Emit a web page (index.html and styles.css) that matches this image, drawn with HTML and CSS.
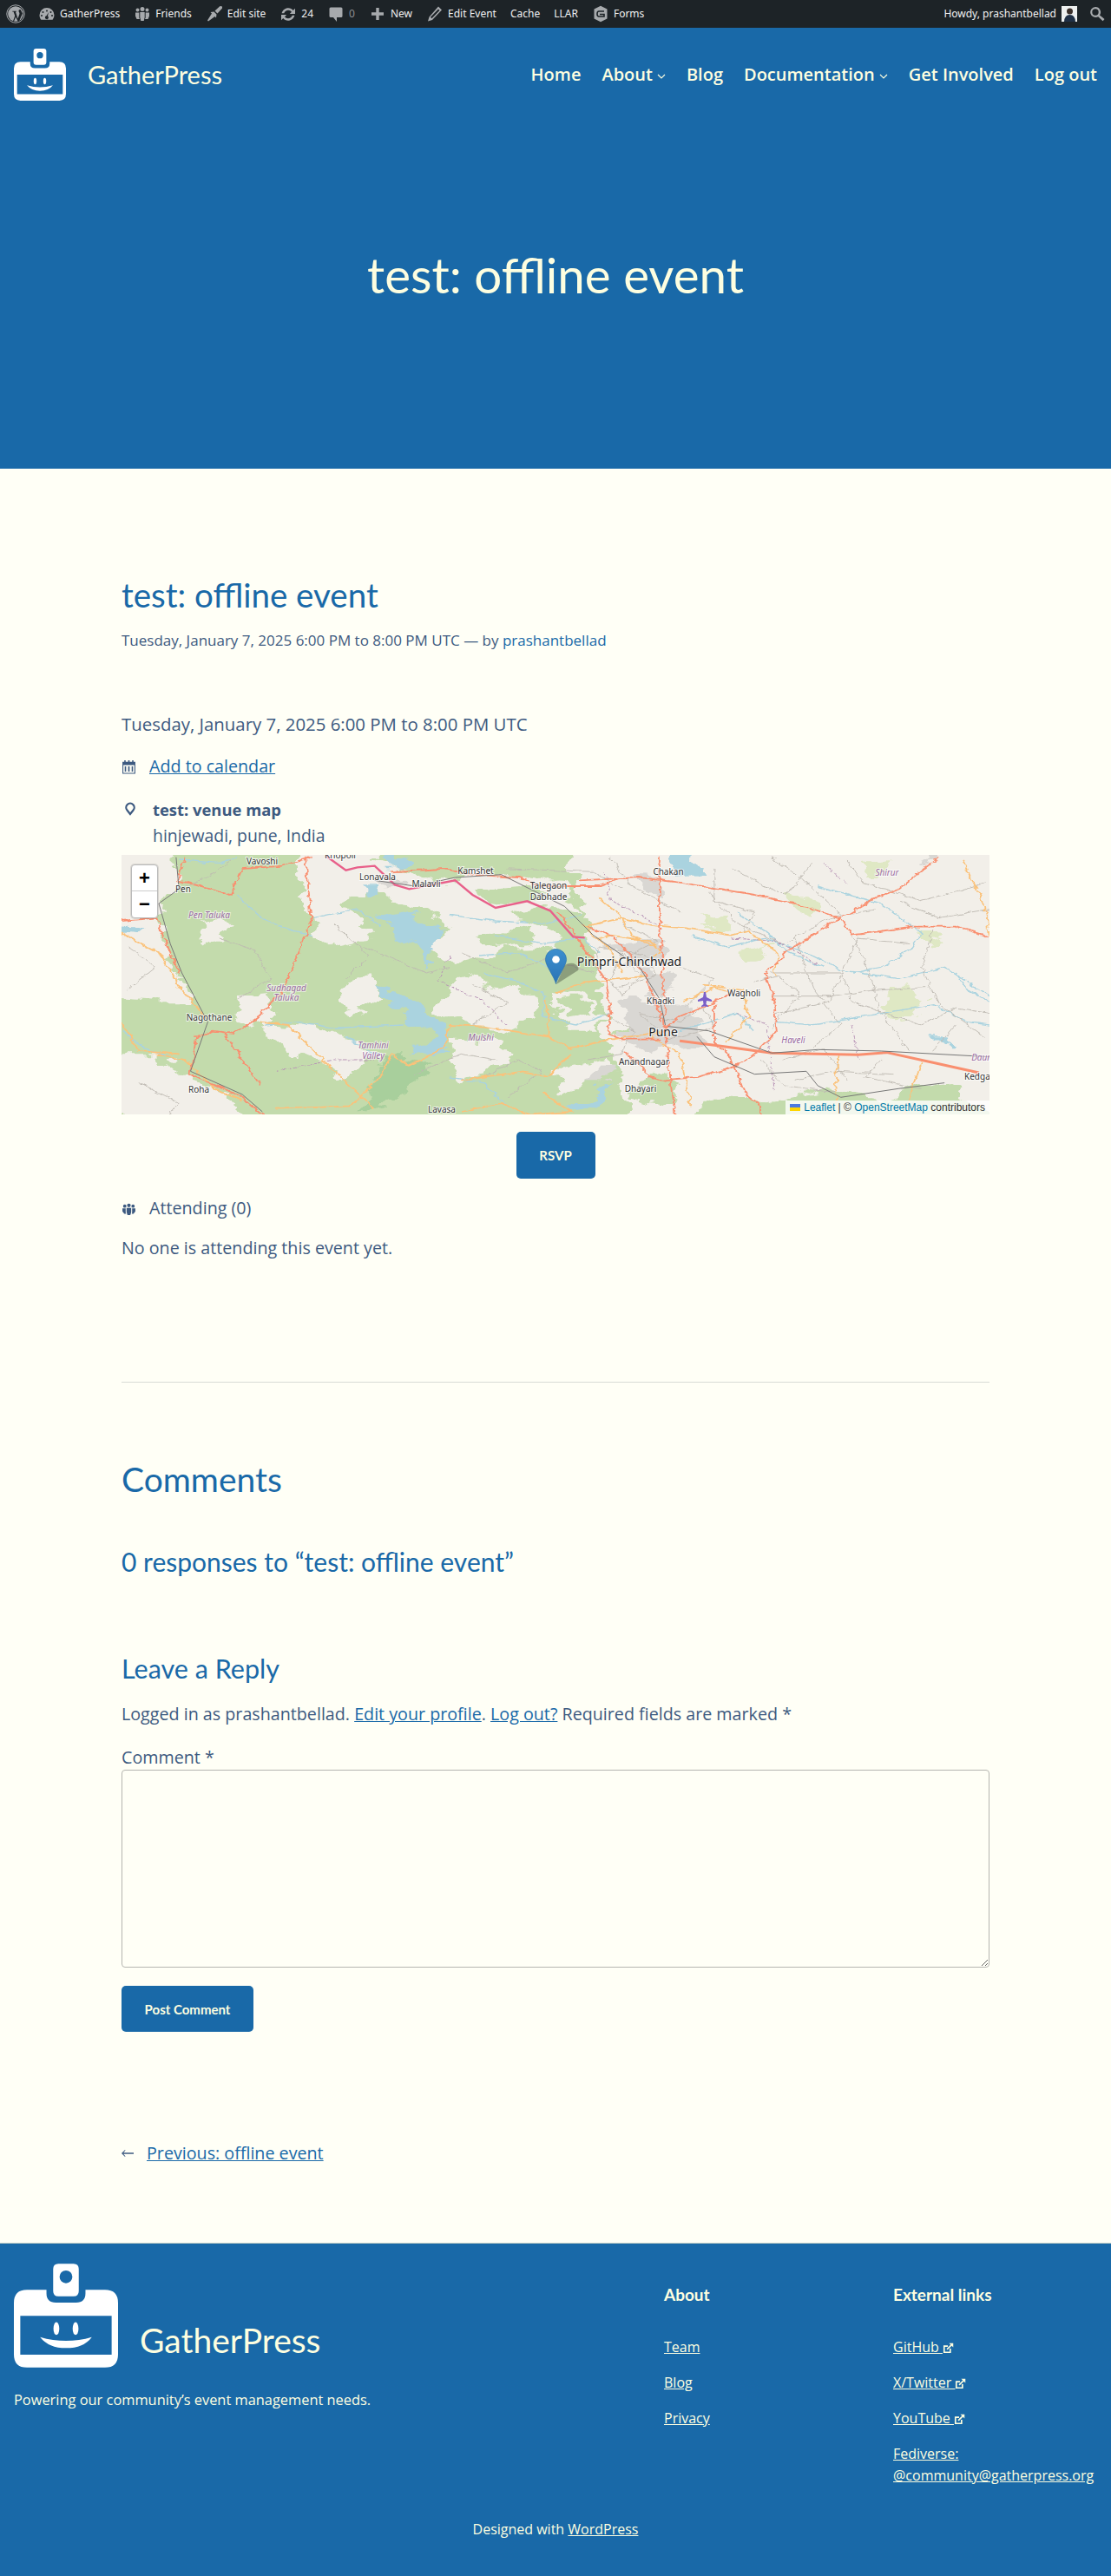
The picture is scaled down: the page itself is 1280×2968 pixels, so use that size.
FILE: index.html
```html
<!DOCTYPE html>
<html lang="en">
<head>
<meta charset="utf-8">
<title>test: offline event – GatherPress</title>
<link rel="stylesheet" href="styles.css">
</head>
<body>
<svg class="defs" aria-hidden="true">
  <defs>
    <filter id="organic" x="-5%" y="-5%" width="110%" height="110%">
      <feTurbulence type="fractalNoise" baseFrequency=".018" numOctaves="4" seed="7"/>
      <feDisplacementMap in="SourceGraphic" scale="70" xChannelSelector="R" yChannelSelector="G"/>
    </filter>
    <filter id="wiggle" x="-5%" y="-5%" width="110%" height="110%">
      <feTurbulence type="fractalNoise" baseFrequency=".05" numOctaves="3" seed="3"/>
      <feDisplacementMap in="SourceGraphic" scale="14" xChannelSelector="R" yChannelSelector="G"/>
    </filter>
  </defs>
  <symbol id="badge" viewBox="50 88 358 357">
    <path fill="#fff" fill-rule="evenodd" d="M95 178H162V190Q162 222 194 222H264Q296 222 296 190V178H363Q408 178 408 223V400Q408 445 363 445H95Q50 445 50 400V223Q50 178 95 178ZM72 267V401H386V267Z"/>
    <path fill="#fff" fill-rule="evenodd" d="M203 88H255Q273 88 273 106V182Q273 200 255 200H203Q185 200 185 182V106Q185 88 203 88ZM229 111A22 22 0 1 0 229.01 155A22 22 0 1 0 229 111Z"/>
    <ellipse fill="#fff" cx="196" cy="311" rx="10" ry="22"/>
    <ellipse fill="#fff" cx="262" cy="311" rx="10" ry="22"/>
    <path fill="#fff" d="M140 340Q229 366 318 340Q290 378 229 378Q170 378 140 340Z"/>
  </symbol>
  <symbol id="ext" viewBox="0 0 14 14">
    <path fill="none" stroke="currentColor" stroke-width="1.800" d="M9.500 7.500V12.100H1.900V4.500H6.500"/>
    <path fill="none" stroke="currentColor" stroke-width="1.800" d="M5.500 8.500L12 2"/>
    <path fill="currentColor" d="M8 .8H13.200V6Z"/>
  </symbol>
</svg>

<div class="adminbar">
  <div class="ab-group">
    <span class="ab-item ab-logo"><svg class="ab-icon-lg" viewBox="0 0 20 20"><circle cx="10" cy="10" r="9.300" fill="none" stroke="#a7aaad" stroke-width=".9"/><circle cx="10" cy="10" r="8" fill="#a7aaad"/><path fill="#1d2327" d="M3 7.200L7.200 17.800 9.300 12 7.800 7.800H6.600V7H11V7.800H9.900L12.300 15 13.900 10.500C14.500 8.700 13.400 8.200 13.200 7.200 13 5.900 14.200 5 15.300 5.700L17.300 9.500 13.500 18 12.700 18.300 10.100 13.200 8 18.300 7.300 18.100Z"/></svg></span>
    <span class="ab-item"><svg class="ab-icon" viewBox="0 0 20 20"><path fill="#a7aaad" d="M10 3A8.500 8.500 0 0 0 1.500 11.500C1.500 13.500 2.200 15.400 3.400 16.800H16.600A8.500 8.500 0 0 0 18.500 11.500 8.500 8.500 0 0 0 10 3ZM10 5.500A1 1 0 1 1 10 7.500 1 1 0 0 1 10 5.500ZM5.500 7A1 1 0 1 1 5.500 9 1 1 0 0 1 5.500 7ZM14.500 7A1 1 0 1 1 14.500 9 1 1 0 0 1 14.500 7ZM4 11A1 1 0 1 1 4 13 1 1 0 0 1 4 11ZM16 11A1 1 0 1 1 16 13 1 1 0 0 1 16 11ZM12 8L11 12.500A2 2 0 1 1 9.500 12.200Z"/></svg>GatherPress</span>
    <span class="ab-item"><svg class="ab-icon" viewBox="0 0 20 20"><path fill="#a7aaad" d="M10 2A2.500 2.500 0 1 1 10 7 2.500 2.500 0 0 1 10 2ZM4.500 3.500A2 2 0 1 1 4.500 7.500 2 2 0 0 1 4.500 3.500ZM15.500 3.500A2 2 0 1 1 15.500 7.500 2 2 0 0 1 15.500 3.500ZM7.300 8H12.700V14L11.700 18H8.300L7.300 14ZM2 8.500H6.300V14.500L7 16H3.500L2 12.500ZM13.700 8.500H18V12.500L16.500 16H13L13.700 14.500Z"/></svg>Friends</span>
    <span class="ab-item"><svg class="ab-icon" viewBox="0 0 20 20"><path fill="#a7aaad" d="M19 1.500L16.500 1 10.500 6.500 13.500 9.500 19 3.500ZM9.500 7.500L5.500 8 7 9.500 2 17.500 3 18.500 10.500 13 12 14.500 12.500 10.500Z"/></svg>Edit site</span>
    <span class="ab-item"><svg class="ab-icon" viewBox="0 0 20 20"><path fill="#a7aaad" d="M10.200 3.300C12.500 3.300 14.400 4.300 15.700 6L18 3.700V10H11.800L14 7.800C13.100 6.500 11.700 5.800 10.200 5.800 7.900 5.800 6 7.300 5.300 9.300H2.600C3.400 5.900 6.500 3.300 10.200 3.300ZM2 11H8.200L6 13.200C6.900 14.500 8.300 15.200 9.800 15.200 12.100 15.200 14 13.700 14.700 11.700H17.400C16.600 15.100 13.500 17.700 9.800 17.700 7.500 17.700 5.600 16.700 4.300 15L2 17.300Z"/></svg>24</span>
    <span class="ab-item ab-dim"><svg class="ab-icon" viewBox="0 0 20 20"><path fill="#a7aaad" d="M4 2.500H16A1.500 1.500 0 0 1 17.500 4V12.500A1.500 1.500 0 0 1 16 14H11V19L7 14H4A1.500 1.500 0 0 1 2.500 12.500V4A1.500 1.500 0 0 1 4 2.500Z"/></svg>0</span>
    <span class="ab-item"><svg class="ab-icon" viewBox="0 0 20 20"><path fill="#a7aaad" d="M8.300 3H11.700V8.300H17V11.700H11.700V17H8.300V11.700H3V8.300H8.300Z"/></svg>New</span>
    <span class="ab-item"><svg class="ab-icon" viewBox="0 0 20 20"><path fill="#a7aaad" d="M14 1.500L18 5.500 7 17 2 18.500 3.500 13.500ZM14 4.500L5 13.800 6.500 15.300 15.500 6Z"/></svg>Edit Event</span>
    <span class="ab-item">Cache</span>
    <span class="ab-item">LLAR</span>
    <span class="ab-item"><svg class="ab-icon" viewBox="0 0 20 20"><path fill="#a7aaad" d="M10 .8L17.500 4.600V15.400L10 19.200 2.500 15.400V4.600Z"/><path fill="none" stroke="#1d2327" stroke-width="1.600" d="M14 7H8Q6 7 6 10T8 13H14V10.500H9"/></svg>Forms</span>
  </div>
  <div class="ab-group">
    <span class="ab-item ab-user">Howdy, prashantbellad<svg class="ab-avatar" viewBox="0 0 18 18"><rect width="18" height="18" fill="#eef0f0"/><circle cx="9.500" cy="6" r="3.500" fill="#3a2f2a"/><path fill="#1f2f45" d="M3 18Q3.500 10 9.500 10T16 18Z"/></svg></span>
    <span class="ab-item ab-search"><svg class="ab-icon" viewBox="0 0 20 20"><path fill="#a7aaad" d="M8 2A6 6 0 0 1 13 11.400L18.500 16 16.600 18.300 11.200 13.200A6 6 0 1 1 8 2ZM8 4.300A3.700 3.700 0 1 0 8 11.700 3.700 3.700 0 0 0 8 4.300Z"/></svg></span>
  </div>
</div>

<header class="hero">
  <div class="topnav">
    <a class="brand"><svg class="brand-logo"><use href="#badge"/></svg><span>GatherPress</span></a>
    <nav class="mainnav">
      <a>Home</a>
      <a>About<svg class="chev" viewBox="0 0 10 6"><path d="M1 1L5 5 9 1"/></svg></a>
      <a>Blog</a>
      <a>Documentation<svg class="chev" viewBox="0 0 10 6"><path d="M1 1L5 5 9 1"/></svg></a>
      <a>Get Involved</a>
      <a>Log out</a>
    </nav>
  </div>
  <h1 class="hero-title">test: offline event</h1>
</header>

<main class="content">
  <h2 class="post-title">test: offline event</h2>
  <p class="meta">Tuesday, January 7, 2025 6:00 PM to 8:00 PM UTC <span class="dash">—</span> by <a>prashantbellad</a></p>
  <p class="datetime">Tuesday, January 7, 2025 6:00 PM to 8:00 PM UTC</p>
  <p class="cal-row"><svg class="row-icon" viewBox="0 0 16 16"><path fill="#3d5a80" d="M1 2.500H3V1H4.500V2.500H7.200V1H8.800V2.500H11.500V1H13V2.500H15V15.500H1ZM2 6V14.500H14V6ZM3.500 7.500H5V13.200H3.500ZM7.200 7.500H8.800V13.200H7.200ZM11 7.500H12.500V13.200H11Z"/></svg><a>Add to calendar</a></p>
  <div class="venue">
    <svg class="pin-icon" viewBox="0 0 14 16"><path fill="none" stroke="#3d5a80" stroke-width="2.200" d="M7 14L3.500 9.500A4.700 4.700 0 1 1 10.500 9.500Z"/></svg>
    <div>
      <div class="venue-name">test: venue map</div>
      <div class="venue-addr">hinjewadi, pune, India</div>
    </div>
  </div>

  <div class="map">
    <svg class="map-art" viewBox="0 0 1000 299" preserveAspectRatio="none">
      <rect width="1000" height="299" fill="#f2efe9"/>
      <g transform="translate(-20,-4) scale(.6631,.3333)">
        <g filter="url(#organic)">
          <path fill="#c3dbac" d="M-40 -40H800L840 240 860 420 870 620 890 760 920 960H-40Z"/>
          <g fill="#f2efe9">
            <path d="M-40 -40H125L130 120 90 170 105 300 120 380 150 520 90 520 -40 500Z"/>
            <path d="M330 -40H500L470 90 430 190 470 300 400 330 360 300 345 180Z"/>
            <path d="M430 30L520 60 610 110 640 60 800 100 830 210 760 190 640 250 560 210 500 170 450 110Z"/>
            <path d="M165 250L210 255 215 320 170 320Z"/>
            <path d="M600 200L700 220 780 250 790 330 700 340 650 370 610 390 570 330Z"/>
            <path d="M620 430L700 470 750 510 760 560 700 620 610 590 570 530Z"/>
            <path d="M235 495L285 490 290 590 240 610Z"/>
            <path d="M270 590L360 600 430 650 480 690 420 780 350 720 290 650Z"/>
            <path d="M610 640L680 650 700 730 620 790 590 720Z"/>
            <path d="M-40 700L100 700 150 800 210 820 250 960 70 960 -40 860Z"/>
            <path d="M780 480L850 490 865 620 790 620Z"/>
            <path d="M780 760L860 710 880 760 840 800 790 830Z"/>
            <path d="M420 440L470 430 480 500 440 560 400 530Z"/>
          </g>
          <g fill="#c3dbac">
            <path d="M660 290L750 250 745 320 680 340Z"/>
            <path d="M650 130L730 120 760 160 720 190 660 180Z"/>
            <path d="M790 510L840 500 850 570 800 590Z"/>
            <path d="M1100 880L1250 820 1330 850 1440 795 1500 860 1580 960H1100Z"/>
            <path d="M920 560L980 590 960 660 890 640Z"/>
            <path d="M1000 960L1040 860 1130 860 1100 960Z"/>
            <path d="M950 770L1000 800 970 880 920 860Z"/>
          </g>
          <path fill="#a8cf9c" d="M480 700L515 700 520 740 575 725 560 770 520 800 525 840 470 910 445 910 470 820Z"/>
          <g fill="#dfe8c4">
            <path d="M1200 150L1250 180 1240 230 1200 210Z"/>
            <path d="M1350 470L1400 460 1440 520 1390 590 1350 560Z"/>
            <path d="M1040 230L1090 220 1080 280 1050 270Z"/>
            <path d="M1110 340L1160 320 1150 370 1120 380Z"/>
            <path d="M1320 30L1350 25 1350 90 1325 90Z"/>
            <path d="M1420 270L1460 280 1440 340Z"/>
          </g>
          <g fill="#d9d7d3">
            <path d="M880 320L960 300 970 370 900 400Z"/>
            <path d="M940 400L985 420 975 510 940 500Z"/>
            <path d="M910 510L1010 530 1050 650 960 690 900 640Z"/>
            <path d="M920 90L970 100 965 150 925 140Z"/>
            <path d="M480 100L510 100 510 130 490 130Z"/>
            <path d="M850 740L880 740 880 790 850 790Z"/>
            <path d="M1420 -20L1460 -20 1440 40Z"/>
          </g>
          <g fill="#aad3df">
            <path d="M480 225L520 210 575 250 580 330 560 400 540 310 500 270Z"/>
            <path d="M470 470L510 500 545 540 590 590 605 640 590 690 530 710 580 640 540 590 500 540Z"/>
            <path d="M490 -20L520 -20 515 55 495 55Z"/>
            <path d="M980 -20L1040 -20 1030 85 985 90Z"/>
            <path d="M35 250L75 255 60 280 38 275Z"/>
            <path d="M450 115L480 115 470 150 450 150Z"/>
            <path d="M1450 640L1470 640 1465 670 1450 670Z"/>
            <path d="M800 890L880 800 860 860 820 905Z"/>
          </g>
        </g>
        <g filter="url(#wiggle)">
          <g fill="none" stroke="#aad3df" stroke-width="1.400">
            <path vector-effect="non-scaling-stroke" d="M680 290L760 320 830 300 860 350"/>
            <path vector-effect="non-scaling-stroke" d="M650 360L720 350 770 400"/>
            <path vector-effect="non-scaling-stroke" d="M660 420L720 450 770 500 760 570 820 600 880 560"/>
            <path vector-effect="non-scaling-stroke" d="M1020 290L1080 330 1150 300 1220 350 1280 410 1380 440 1460 400 1538 500"/>
            <path vector-effect="non-scaling-stroke" d="M1170 590L1230 600 1290 580 1350 560 1440 530 1500 590 1538 600"/>
            <path vector-effect="non-scaling-stroke" d="M1240 120L1350 180 1420 280 1400 340 1350 400 1300 420"/>
            <path vector-effect="non-scaling-stroke" d="M1100 210L1150 280 1190 350 1250 400"/>
            <path vector-effect="non-scaling-stroke" d="M280 600L340 590 400 610 520 600"/>
            <path vector-effect="non-scaling-stroke" d="M130 30L200 40 230 20"/>
            <path vector-effect="non-scaling-stroke" d="M1000 620L1100 560 1130 620"/>
            <path vector-effect="non-scaling-stroke" d="M360 230L440 200 480 260"/>
            <path vector-effect="non-scaling-stroke" d="M230 150L250 190 290 250 360 290"/>
            <path vector-effect="non-scaling-stroke" d="M600 220L680 240 760 250 830 220"/>
            <path vector-effect="non-scaling-stroke" d="M30 620L70 680 130 720"/>
            <path vector-effect="non-scaling-stroke" d="M600 780L660 800 700 880"/>
            <path vector-effect="non-scaling-stroke" d="M1480 420L1500 480 1538 520"/>
            <path vector-effect="non-scaling-stroke" d="M420 640L460 690 480 700"/>
          </g>
          <g fill="none" stroke="#bdb9b1" stroke-width=".9">
            <path vector-effect="non-scaling-stroke" d="M1050 140L1100 250 1180 320 1260 230 1340 200"/>
            <path vector-effect="non-scaling-stroke" d="M1090 60L1180 150 1200 120 1230 40"/>
            <path vector-effect="non-scaling-stroke" d="M1160 420L1280 420 1300 520 1420 600 1480 540 1538 560"/>
            <path vector-effect="non-scaling-stroke" d="M1170 560L1260 520 1310 300 1400 320"/>
            <path vector-effect="non-scaling-stroke" d="M1180 720L1250 680 1290 790"/>
            <path vector-effect="non-scaling-stroke" d="M1350 720L1320 780 1420 820"/>
            <path vector-effect="non-scaling-stroke" d="M620 350L700 420 770 370 850 420"/>
            <path vector-effect="non-scaling-stroke" d="M450 330L560 420 600 400"/>
            <path vector-effect="non-scaling-stroke" d="M900 130L850 70 700 60"/>
            <path vector-effect="non-scaling-stroke" d="M220 30L180 90 130 130"/>
            <path vector-effect="non-scaling-stroke" d="M1000 400L1060 440 1010 540"/>
            <path vector-effect="non-scaling-stroke" d="M1130 450L1170 430 1210 490 1160 610"/>
            <path vector-effect="non-scaling-stroke" d="M660 780L720 720 760 760 700 850"/>
            <path vector-effect="non-scaling-stroke" d="M900 350L930 430 900 500 880 440Z"/>
            <path vector-effect="non-scaling-stroke" d="M930 560L1000 590 1040 540 1060 610 980 650Z"/>
            <path vector-effect="non-scaling-stroke" d="M1160 20L1210 90 1280 220"/>
            <path vector-effect="non-scaling-stroke" d="M1290 30L1320 110 1420 170 1530 110"/>
            <path vector-effect="non-scaling-stroke" d="M1380 170L1450 230 1538 200"/>
            <path vector-effect="non-scaling-stroke" d="M1200 300L1230 470 1280 600 1230 680"/>
            <path vector-effect="non-scaling-stroke" d="M1300 290L1330 420 1350 560 1400 690"/>
            <path vector-effect="non-scaling-stroke" d="M1440 270L1420 400 1450 530 1530 640"/>
            <path vector-effect="non-scaling-stroke" d="M1480 600L1440 690"/>
            <path vector-effect="non-scaling-stroke" d="M1160 500L1260 500 1340 480 1430 470"/>
            <path vector-effect="non-scaling-stroke" d="M1060 60L1060 170 1130 210 1110 280"/>
            <path vector-effect="non-scaling-stroke" d="M1200 790L1270 760 1370 770"/>
            <path vector-effect="non-scaling-stroke" d="M1140 720L1180 810 1270 830"/>
            <path vector-effect="non-scaling-stroke" d="M880 20L910 110 1000 210"/>
            <path vector-effect="non-scaling-stroke" d="M870 560L920 620 900 700 840 720"/>
            <path vector-effect="non-scaling-stroke" d="M230 510L290 440 260 340 200 300"/>
            <path vector-effect="non-scaling-stroke" d="M40 330L90 400 40 480"/>
            <path vector-effect="non-scaling-stroke" d="M400 250L460 360 420 440"/>
            <path vector-effect="non-scaling-stroke" d="M640 460L700 520 640 600"/>
            <path vector-effect="non-scaling-stroke" d="M540 770L620 700 680 720"/>
            <path vector-effect="non-scaling-stroke" d="M60 800L130 870 110 910"/>
            <path vector-effect="non-scaling-stroke" d="M890 300L910 360 960 310 900 250"/>
            <path vector-effect="non-scaling-stroke" d="M860 330L940 360 960 430 890 470 850 400Z"/>
          </g>
          <g fill="none" stroke="#b793b5" stroke-dasharray="4 2">
            <path vector-effect="non-scaling-stroke" d="M1090 300L1170 310 1240 390"/>
            <path vector-effect="non-scaling-stroke" d="M1100 560L1150 600 1165 830"/>
            <path vector-effect="non-scaling-stroke" d="M600 360L580 450 660 520 700 600"/>
            <path vector-effect="non-scaling-stroke" d="M300 760L400 720 470 720"/>
            <path vector-effect="non-scaling-stroke" d="M870 70L880 170 970 260"/>
            <path vector-effect="non-scaling-stroke" d="M1300 600L1310 720"/>
            <path vector-effect="non-scaling-stroke" d="M1250 40L1290 110"/>
          </g>
          <g fill="none" stroke="#fbc27a" stroke-width="1.800">
            <path vector-effect="non-scaling-stroke" d="M835 260L900 230 950 255 1010 265 1090 290 1120 275 1170 350 1165 430"/>
            <path vector-effect="non-scaling-stroke" d="M860 160L900 230 915 290 960 330"/>
            <path vector-effect="non-scaling-stroke" d="M860 300L880 290 950 310 965 340 950 380"/>
            <path vector-effect="non-scaling-stroke" d="M785 490L830 455 900 440 940 430"/>
            <path vector-effect="non-scaling-stroke" d="M770 510L770 640 810 680 880 650 980 620"/>
            <path vector-effect="non-scaling-stroke" d="M600 600L660 605 770 640"/>
            <path vector-effect="non-scaling-stroke" d="M600 600L590 680 530 740 500 700 480 780 430 880 300 890"/>
            <path vector-effect="non-scaling-stroke" d="M1005 520L1060 470 1090 490"/>
            <path vector-effect="non-scaling-stroke" d="M1040 460L1110 480 1120 570 1080 660"/>
            <path vector-effect="non-scaling-stroke" d="M30 280L100 360 130 470 180 580"/>
            <path vector-effect="non-scaling-stroke" d="M270 590L320 600 360 680 410 780 470 890"/>
            <path vector-effect="non-scaling-stroke" d="M620 790L730 760 770 780 810 700"/>
            <path vector-effect="non-scaling-stroke" d="M760 830L810 900 740 910 690 870 620 900"/>
            <path vector-effect="non-scaling-stroke" d="M1490 30L1530 180 1538 290"/>
            <path vector-effect="non-scaling-stroke" d="M1275 700L1270 910"/>
            <path vector-effect="non-scaling-stroke" d="M1420 730L1400 850 1390 910"/>
            <path vector-effect="non-scaling-stroke" d="M90 700L140 720 200 830 240 860"/>
            <path vector-effect="non-scaling-stroke" d="M950 640L1000 700 1020 880"/>
            <path vector-effect="non-scaling-stroke" d="M830 250L880 340 900 420"/>
            <path vector-effect="non-scaling-stroke" d="M30 590L60 690 130 700"/>
          </g>
          <g fill="none" stroke="#f98f6f" stroke-width="1.800">
            <path vector-effect="non-scaling-stroke" d="M1450 20L1380 130 1340 160 1280 230 1190 340 1150 420 1165 530 1170 620 1130 700"/>
            <path vector-effect="non-scaling-stroke" d="M825 100L930 90 1010 110 1130 150 1200 180 1280 230 1300 290 1400 260 1480 260 1538 295"/>
            <path vector-effect="non-scaling-stroke" d="M965 20L965 240 975 610 990 910"/>
            <path vector-effect="non-scaling-stroke" d="M790 210L870 440 880 560 875 630 900 650 970 650"/>
            <path vector-effect="non-scaling-stroke" d="M840 260L880 290 940 420 970 590"/>
            <path vector-effect="non-scaling-stroke" d="M1090 490L1050 530 1000 570 975 610"/>
            <path vector-effect="non-scaling-stroke" d="M1060 530L1060 660 1090 710 1110 830"/>
            <path vector-effect="non-scaling-stroke" d="M970 790L1030 780 1090 750 1130 700"/>
            <path vector-effect="non-scaling-stroke" d="M905 690L950 780 975 795"/>
            <path vector-effect="non-scaling-stroke" d="M30 240L90 230 130 420"/>
            <path vector-effect="non-scaling-stroke" d="M140 20L130 100 220 150 240 60 310 50 360 20"/>
            <path vector-effect="non-scaling-stroke" d="M350 20L360 240 310 480 270 570 225 630 190 620 160 640 150 770 240 850 275 910"/>
            <path vector-effect="non-scaling-stroke" d="M210 630L270 810"/>
            <path vector-effect="non-scaling-stroke" d="M1110 830L1140 880 1140 910"/>
            <path vector-effect="non-scaling-stroke" d="M500 70L590 60 640 80 720 90 760 120 860 120 900 90"/>
          </g>
        </g>
        <path fill="none" stroke="#f98f6f" stroke-width="3" vector-effect="non-scaling-stroke" d="M1000 655L1060 670 1160 697 1310 703 1360 695 1440 730 1520 765"/>
        <path fill="none" stroke="#e8608a" stroke-width="2.400" vector-effect="non-scaling-stroke" d="M385 15L420 65 440 55 470 50 505 115 530 130 610 100 640 150 680 195 735 172 775 205 815 295 835 298"/>
        <g fill="none" stroke="#777">
          <path vector-effect="non-scaling-stroke" d="M125 20L130 130 95 180 115 320 135 420 180 590 150 760 240 840 275 900"/>
          <path vector-effect="non-scaling-stroke" d="M470 100L540 120 610 90 690 80 800 190 850 290 930 400 965 510 975 600"/>
          <path vector-effect="non-scaling-stroke" d="M980 605L1050 620 1160 697 1240 685 1350 690 1538 710"/>
          <path vector-effect="non-scaling-stroke" d="M1030 640L1060 710 1130 770 1220 760 1240 810 1280 850 1380 820 1460 800"/>
        </g>
      </g>
      <path fill="#7a5fc8" d="M671 158L673 158 674 164 680 167 680 169 674 168 673.500 172 676 174 676 175 672 174.500 668 175 668 174 670.500 172 670 168 664 169 664 167 670 164Z"/>
      <g class="lbl">
        <text x="162" y="11">Vavoshi</text><text x="252" y="4">Khopoli</text><text x="408" y="22">Kamshet</text>
        <text x="295" y="29">Lonavala</text><text x="351" y="37">Malavli</text><text x="71" y="43">Pen</text>
        <text x="492" y="39">Talegaon</text><text x="492" y="52">Dabhade</text><text x="630" y="23">Chakan</text>
        <text x="717" y="163">Wagholi</text><text x="621" y="172">Khadki</text><text x="101" y="191">Nagothane</text>
        <text x="602" y="242">Anandnagar</text><text x="89" y="274">Roha</text><text x="598" y="273">Dhayari</text>
        <text x="369" y="297">Lavasa</text><text x="992" y="259">Kedgaon</text>
        <text class="lbl-big" x="585" y="128">Pimpri-Chinchwad</text><text class="lbl-big" x="624" y="209">Pune</text>
      </g>
      <g class="lbl-area">
        <text x="882" y="24">Shirur</text><text x="101" y="73">Pen Taluka</text><text x="190" y="157">Sudhagad</text>
        <text x="190" y="168">Taluka</text><text x="414" y="214">Mulshi</text><text x="774" y="217">Haveli</text>
        <text x="290" y="223">Tamhini</text><text x="290" y="235">Valley</text><text x="994" y="237">Daund</text>
      </g>
    </svg>
    <div class="zoomctl"><span class="zoom-in">+</span><span>−</span></div>
    <svg class="marker" viewBox="0 0 41 41">
      <path fill="#000" opacity=".28" d="M13 41L38 25Q40 20 33 17 26 16 22 20Z"/>
      <defs><linearGradient id="mk" x1="0" y1="0" x2="0" y2="1"><stop offset="0" stop-color="#3d8fcf"/><stop offset="1" stop-color="#2a73b5"/></linearGradient></defs>
      <path fill="url(#mk)" stroke="#2a6ea8" stroke-width=".6" d="M12.500 40.700C11.500 34 .4 19.500.4 12.500A12.100 12.100 0 0 1 24.600 12.500C24.600 19.500 13.500 34 12.500 40.700Z"/>
      <circle cx="12.500" cy="12.500" r="4.300" fill="#fff"/>
    </svg>
    <div class="attribution"><svg class="flag" viewBox="0 0 12 8"><rect width="12" height="4" fill="#4c7be1"/><rect y="4" width="12" height="4" fill="#ffd500"/></svg><a>Leaflet</a> | © <a>OpenStreetMap</a> contributors</div>
  </div>

  <div class="rsvp-wrap"><a class="btn btn-rsvp">RSVP</a></div>
  <p class="attending"><svg class="row-icon" viewBox="0 0 16 16"><path fill="#3d5a80" d="M8 2.500A2 2 0 1 1 8 6.500 2 2 0 0 1 8 2.500ZM3.500 3.500A1.800 1.800 0 1 1 3.500 7.100 1.800 1.800 0 0 1 3.500 3.500ZM12.500 3.500A1.800 1.800 0 1 1 12.500 7.100 1.800 1.800 0 0 1 12.500 3.500ZM5.500 7.300H10.500V12L9.500 15H6.500L5.500 12ZM1 7.800H4.500V12.500L5 13.700H3L1 11ZM11.500 7.800H15V11L13 13.700H11L11.500 12.500Z"/></svg>Attending (0)</p>
  <p class="nobody">No one is attending this event yet.</p>

  <hr class="divider">

  <h2 class="comments-title">Comments</h2>
  <h3 class="responses">0 responses to “test: offline event”</h3>
  <h3 class="reply-title">Leave a Reply</h3>
  <p class="logged">Logged in as prashantbellad. <a>Edit your profile</a>. <a>Log out?</a> Required fields are marked *</p>
  <label class="comment-label" for="comment">Comment *</label>
  <textarea id="comment" class="comment-box"></textarea>
  <a class="btn btn-post">Post Comment</a>
  <p class="prev"><svg class="arrow" viewBox="0 0 14 8"><path fill="#3d5a80" d="M4 0L0 4 4 8 4.500 7.400 2.300 4.700H14V3.300H2.300L4.500 .6Z"/></svg><a>Previous: offline event</a></p>
</main>

<footer class="footer">
  <div class="footer-top">
    <div class="footer-brand">
      <div class="footer-logo-row"><svg class="footer-logo"><use href="#badge"/></svg><span>GatherPress</span></div>
      <p class="tagline">Powering our community’s event management needs.</p>
    </div>
    <div class="footer-col col-about">
      <h4>About</h4>
      <ul><li><a>Team</a></li><li><a>Blog</a></li><li><a>Privacy</a></li></ul>
    </div>
    <div class="footer-col col-links">
      <h4>External links</h4>
      <ul>
        <li><a>GitHub <svg class="ext"><use href="#ext"/></svg></a></li>
        <li><a>X/Twitter <svg class="ext"><use href="#ext"/></svg></a></li>
        <li><a>YouTube <svg class="ext"><use href="#ext"/></svg></a></li>
        <li class="two-line"><a>Fediverse: @community@gatherpress.org</a></li>
      </ul>
    </div>
  </div>
  <p class="credit">Designed with <a>WordPress</a></p>
</footer>
</body>
</html>
```
FILE: styles.css
```css
* { box-sizing: border-box; }
html, body { margin: 0; padding: 0; }
body {
  background: #fffff6;
  color: #3d5a80;
  font-family: "Open Sans", "Noto Sans", sans-serif;
  font-size: 18px;
}
a { color: inherit; }
p, h1, h2, h3, h4, ul { margin: 0; padding: 0; }
.defs { position: absolute; width: 0; height: 0; }

/* admin bar */
.adminbar {
  height: 32px;
  background: #1d2327;
  color: #f0f0f1;
  display: flex;
  justify-content: space-between;
  font-family: "Noto Sans", sans-serif;
  font-size: 12px;
  line-height: 32px;
}
.ab-group { display: flex; }
.ab-item { display: flex; align-items: center; gap: 5px; padding: 0 8px; }
.ab-logo { padding: 0 7px; }
.ab-icon { width: 20px; height: 20px; }
.ab-icon-lg { width: 22px; height: 22px; }
.ab-dim { color: #8c8f94; }
.ab-user { gap: 6px; padding-right: 6px; }
.ab-avatar { width: 18px; height: 18px; }
.ab-search { padding: 0 6px 0 7px; }

/* hero */
.hero { height: 508px; background: #1969a8; color: #fdfee0; }
.topnav {
  display: flex;
  justify-content: space-between;
  align-items: center;
  padding: 24px 16px 0;
}
.brand { display: flex; align-items: center; gap: 25px; }
.brand-logo { width: 60px; height: 60px; }
.brand span { font-family: Lato, sans-serif; font-size: 29px; line-height: 60px; }
.mainnav { display: flex; gap: 24px; font-family: "Open Sans", sans-serif; font-size: 20px; font-weight: 600; margin-top: -1px; }
.mainnav a { display: flex; align-items: center; }
.chev { width: 10px; height: 6px; margin-left: 5px; margin-top: 4px; fill: none; stroke: currentColor; stroke-width: 1.200; }
.hero-title {
  font-family: Lato, sans-serif;
  font-weight: 400;
  font-size: 56.500px;
  line-height: 72px;
  text-align: center;
  margin-top: 164px;
}

/* content */
.content { width: 1000px; margin: 0 auto; padding-top: 120px; }
.post-title, .comments-title, .responses, .reply-title { font-family: Lato, sans-serif; font-weight: 400; color: #1969a8; }
.post-title { font-size: 38.500px; line-height: 50px; }
.meta { font-size: 17px; line-height: 24px; margin-top: 16px; }
.meta a { color: #1969a8; text-decoration: none; }
.dash { color: #3d5a80; }
.datetime { font-size: 20.400px; line-height: 28px; margin-top: 70px; }
.cal-row, .attending { display: flex; align-items: center; gap: 15px; font-size: 19.700px; line-height: 28px; }
.cal-row { margin-top: 21px; }
.cal-row a { color: #1969a8; text-decoration: underline; }
.row-icon { width: 17px; height: 17px; }
.venue { display: flex; gap: 19px; margin-top: 21px; line-height: 30px; }
.pin-icon { width: 14px; height: 16px; margin: 6px 0 0 3px; }
.venue-name { font-weight: 700; font-size: 18.400px; }
.venue-addr { font-size: 19.400px; }

/* map */
.map { position: relative; height: 299px; margin-top: 7px; overflow: hidden; background: #f2efe9; }
.map-art { display: block; width: 1000px; height: 299px; }
.lbl text, .lbl-area text { text-anchor: middle; font-family: "Noto Sans", sans-serif; font-size: 10px; }
.lbl text { fill: #333; paint-order: stroke; stroke: rgba(255,255,255,.75); stroke-width: 2px; }
.lbl .lbl-big { font-size: 14px; fill: #222; }
.lbl-area text { fill: #9a6b9f; font-style: italic; paint-order: stroke; stroke: rgba(255,255,255,.6); stroke-width: 2px; }
.zoomctl {
  position: absolute; left: 11px; top: 11px; width: 31px;
  display: flex; flex-direction: column;
  background: #fff; border-radius: 4px; border: 1px solid #bbb;
  box-shadow: 0 0 0 1px rgba(0,0,0,.1);
  font-family: "Liberation Sans", sans-serif; font-weight: 700; font-size: 22px; color: #000; text-align: center;
}
.zoomctl span { height: 30px; line-height: 30px; }
.zoom-in { border-bottom: 1px solid #ccc; }
.marker { position: absolute; left: 488px; top: 108px; width: 41px; height: 41px; }
.attribution {
  position: absolute; right: 0; bottom: 0; height: 16px; padding: 0 5px;
  display: flex; align-items: center; white-space: pre;
  background: rgba(255,255,255,.8); color: #333;
  font-family: "Liberation Sans", sans-serif; font-size: 12px; line-height: 16px;
}
.attribution a { color: #0078a8; }
.flag { width: 12px; height: 8px; margin-right: 4px; }

/* rsvp */
.rsvp-wrap { display: flex; justify-content: center; margin-top: 20px; }
.btn {
  display: flex; align-items: center; justify-content: center;
  background: #1969a8; color: #fdfee0; border-radius: 5px;
  font-family: Lato, sans-serif; font-weight: 700; font-size: 15px;
}
.btn-rsvp { width: 91px; height: 54px; }
.attending { margin-top: 20px; }
.nobody { font-size: 19.700px; line-height: 28px; margin-top: 18px; }
.divider { border: 0; border-top: 1px solid #d8dcd6; margin: 140px 0 0; }

/* comments */
.comments-title { font-size: 39px; line-height: 50px; margin-top: 86px; }
.responses { font-size: 30px; line-height: 40px; margin-top: 50px; }
.reply-title { font-size: 30.500px; line-height: 40px; margin-top: 83px; }
.logged { font-size: 19.700px; line-height: 28px; margin-top: 19px; }
.logged a { color: #1969a8; text-decoration: underline; }
.comment-label { display: block; font-size: 19.700px; line-height: 28px; margin-top: 22px; }
.comment-box {
  display: block; width: 100%; height: 228px; margin-top: 0;
  background: #fffff6; border: 1px solid #b5b5b0; border-radius: 4px;
}
.btn-post { width: 152px; height: 53px; margin-top: 21px; }
.prev { display: flex; align-items: center; margin-top: 126px; font-size: 19.700px; line-height: 28px; color: #1969a8; }
.prev a { text-decoration: underline; }
.arrow { width: 14px; height: 8px; margin-right: 15px; }

/* footer */
.footer { margin-top: 89px; height: 386px; background: #1969a8; color: #fdfee0; border-top: 1px solid #c3d0c8; padding: 23px 16px 0; }
.footer-top { display: flex; }
.footer-brand { width: 749px; }
.footer-logo-row { display: flex; align-items: flex-end; gap: 25px; }
.footer-logo { width: 120px; height: 120px; }
.footer-logo-row span { font-family: Lato, sans-serif; font-size: 39px; line-height: 56px; margin-bottom: 4px; }
.tagline { font-size: 16.400px; line-height: 26px; margin-top: 24px; }
.footer-col h4 { font-family: Lato, sans-serif; font-weight: 700; font-size: 19px; line-height: 24px; }
.footer-col { font-size: 16px; line-height: 25px; margin-top: 24px; }
.col-about { width: 264px; }
.col-links { width: 235px; }
.footer-col ul { list-style: none; margin-top: 36px; display: flex; flex-direction: column; gap: 16px; }
.footer-col a { text-decoration: underline; }
.ext { width: 13px; height: 13px; vertical-align: -2px; }
.credit { text-align: center; font-size: 16px; line-height: 24px; margin-top: 37px; }
.credit a { text-decoration: underline; }
```
